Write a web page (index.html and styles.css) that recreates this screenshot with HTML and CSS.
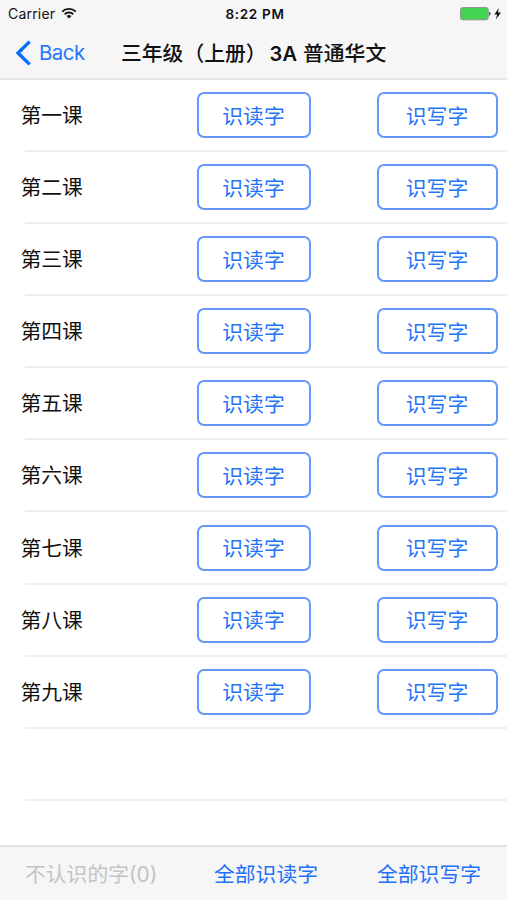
FILE: index.html
```
<!DOCTYPE html>
<html lang="zh-CN">
  <head>
    <meta charset="UTF-8" />
    <meta name="viewport" content="width=device-width, initial-scale=1.0" />
    <title>三年级（上册）3A 普通华文</title>
    <link rel="stylesheet" href="styles.css">
  </head>
  <body>
    <div class="screen">
      <header class="header">
        <div class="status-bar">
          <div class="carrier">
            <span>Carrier</span>
            <svg class="wifi" width="16" height="12" viewBox="0 0 16 12" fill="none" stroke="#111" stroke-width="1.9">
              <path d="M1.2 4.6a9.8 9.8 0 0 1 13.6 0" />
              <path d="M3.7 7.3a6.2 6.2 0 0 1 8.6 0" />
              <path d="M8 11.6L5.5 9.1a3.6 3.6 0 0 1 5 0z" fill="#111" stroke="none" />
            </svg>
          </div>
          <div class="time">8:22 PM</div>
          <div class="power">
            <svg width="42" height="14" viewBox="0 0 42 14">
              <rect x="0.6" y="0.6" width="27.6" height="12.2" rx="2" fill="#43d551" stroke="#8b938b" stroke-width="1" />
              <path d="M29.2 4.8c1.7.3 1.7 3.7 0 4z" fill="#333" />
              <path d="M38.9 1L34.4 7.4h2.8l-1.4 5 5.2-6.8h-3z" fill="#111" />
            </svg>
          </div>
        </div>
        <div class="nav-bar">
          <a class="back">
            <svg width="17" height="26" viewBox="0 0 17 26" fill="none" stroke="#0a6cff" stroke-width="3.4">
              <path d="M14.7 1.6L3 13l11.7 11.4" />
            </svg>
            <span>Back</span>
          </a>
          <h1 class="title">三年级（上册）<span class="latin">3A</span> 普通华文</h1>
        </div>
      </header>

      <ul class="lessons" id="lessons"></ul>

      <footer class="toolbar">
        <span class="tool disabled">不认识的字(0)</span>
        <a class="tool read-all">全部识读字</a>
        <a class="tool write-all">全部识写字</a>
      </footer>
    </div>
    <script>
      const lessons = document.getElementById('lessons');
      const numbers = ['一', '二', '三', '四', '五', '六', '七', '八', '九'];

      numbers.forEach(number => {
          const row = document.createElement('li');
          row.className = 'lesson';
          row.innerHTML = `
              <span class="name">第${number}课</span>
              <button class="read-btn">识读字</button>
              <button class="write-btn">识写字</button>
          `;
          lessons.appendChild(row);
      });

      // Empty row at the end of the list
      const emptyRow = document.createElement('li');
      emptyRow.className = 'lesson';
      lessons.appendChild(emptyRow);
    </script>
  </body>
</html>
```
FILE: styles.css
```
* {
    box-sizing: border-box;
}

body {
    margin: 0;
    font-family: Inter, 'Noto Sans CJK SC', sans-serif;
    background-color: #fff;
    color: #111;
}

.screen {
    display: flex;
    flex-direction: column;
    height: 900px;
    overflow: hidden;
}

.header {
    flex: none;
    height: 80px;
    background-color: #f6f6f6;
    border-bottom: 2px solid #e4e4e4;
}

.status-bar {
    display: grid;
    grid-template-columns: 1fr auto 1fr;
    align-items: center;
    height: 27px;
    padding: 0 5px 0 8px;
    font-size: 14px;
}

.carrier {
    display: flex;
    align-items: center;
    gap: 6px;
    letter-spacing: 0.2px;
}

.wifi {
    margin-top: -1px;
}

.time {
    font-size: 13.5px;
    font-weight: 600;
    letter-spacing: 0.7px;
}

.power {
    display: flex;
    justify-content: flex-end;
}

.nav-bar {
    display: flex;
    align-items: center;
    height: 51px;
    padding-left: 15px;
}

.back {
    display: flex;
    align-items: center;
    gap: 7px;
    width: 106px;
    color: #2478fb;
    font-size: 20.4px;
    letter-spacing: -0.5px;
}

.title {
    margin: 2px 0 0;
    font-size: 20.8px;
    font-weight: 500;
    line-height: 30px;
    white-space: nowrap;
}

.title .latin {
    margin-left: 3px;
    font-size: 20px;
    font-weight: 600;
    letter-spacing: 0.3px;
}

.lessons {
    flex: 1;
    margin: 0;
    padding: 0;
    list-style: none;
}

.lesson {
    display: flex;
    align-items: center;
    height: 72.08px;
    margin-left: 25px;
    padding-right: 9px;
    border-bottom: 2px solid #efefef;
}

.name {
    width: 175.5px;
    margin-left: -4.5px;
    padding-bottom: 2px;
    font-size: 20.8px;
}

.read-btn,
.write-btn {
    height: 46px;
    padding: 0 1px 1px 0;
    border: 2px solid #6398f9;
    border-radius: 7px;
    background-color: #fff;
    color: #2474f8;
    font-family: inherit;
    font-size: 20.8px;
}

.read-btn {
    width: 114px;
    margin-left: 1px;
}

.write-btn {
    width: 121px;
    margin-left: auto;
}

.toolbar {
    display: flex;
    align-items: center;
    flex: none;
    height: 55px;
    padding: 0 26px 2px 25px;
    background-color: #f6f6f6;
    border-top: 2px solid #e4e4e4;
}

.tool {
    color: #1f70fb;
    font-size: 20.8px;
}

.disabled {
    width: 189px;
    color: #c4c4c4;
}

.write-all {
    margin-left: auto;
}
```
